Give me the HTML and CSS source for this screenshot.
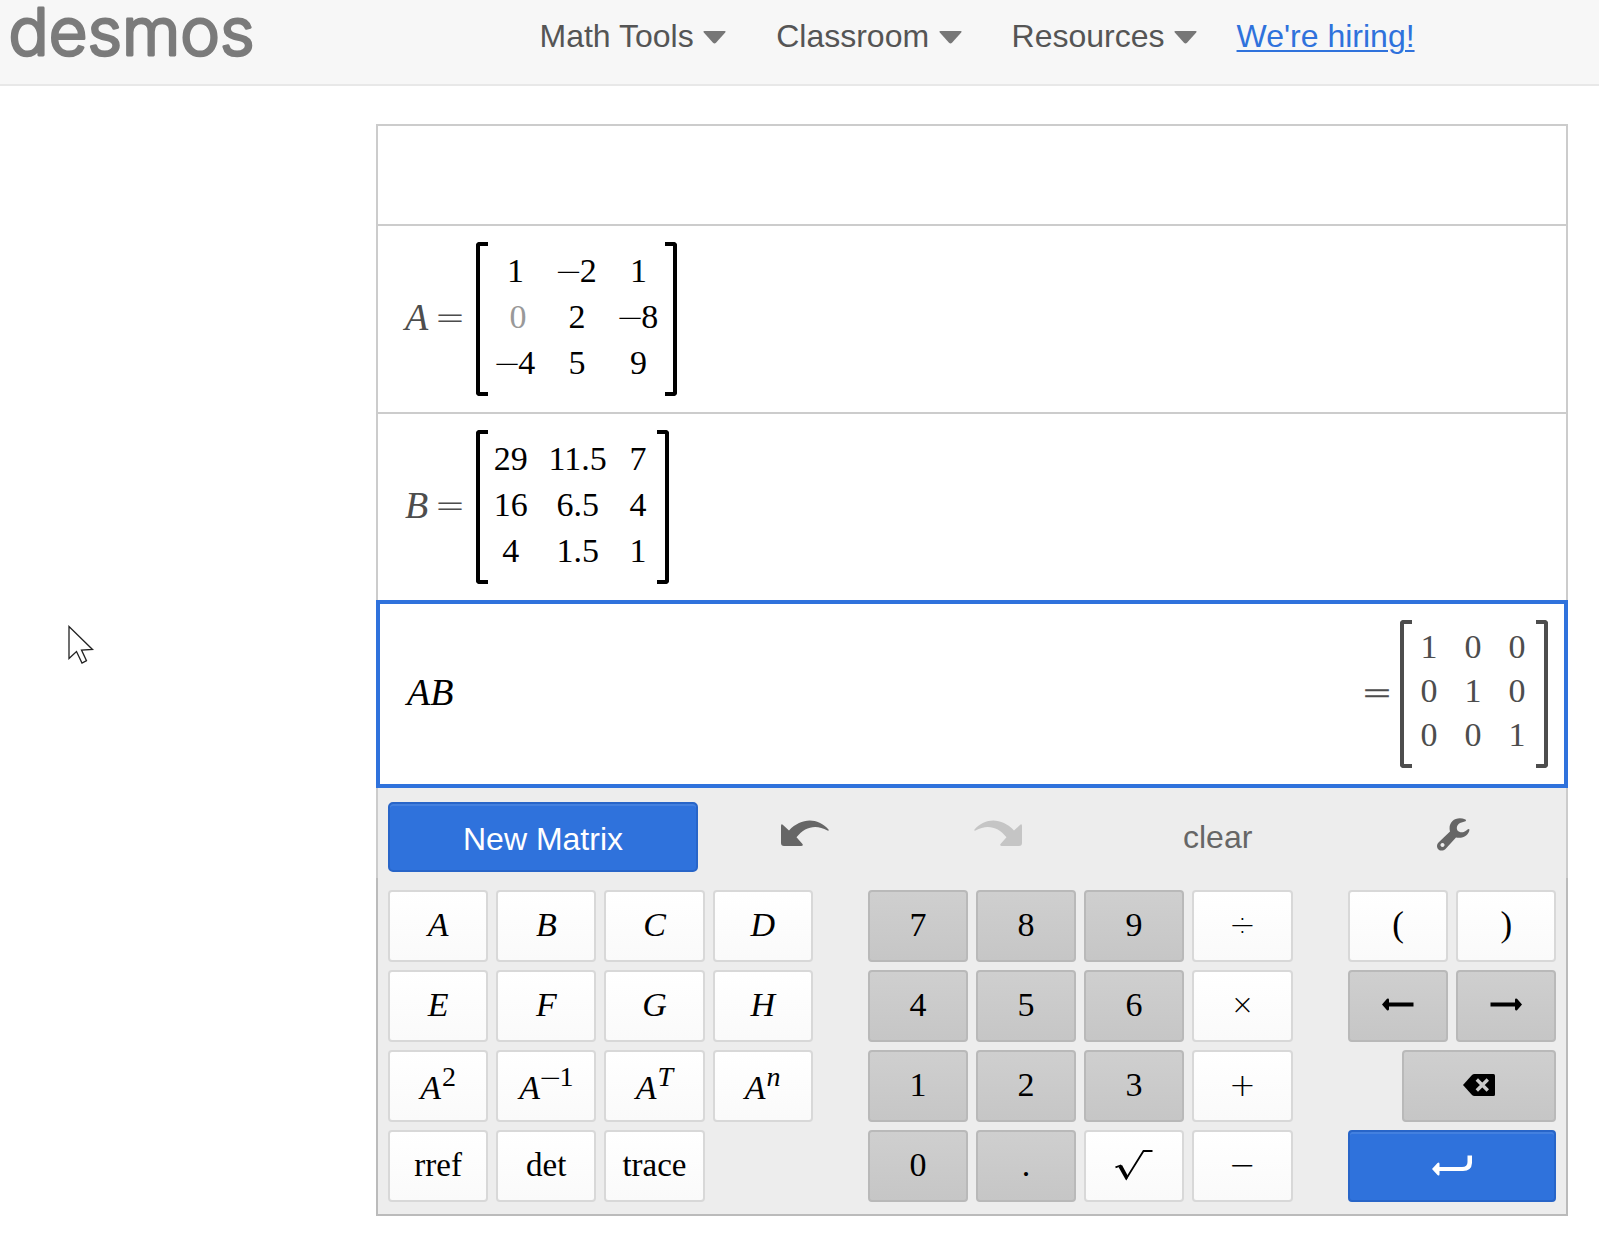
FILE: index.html
```
<!DOCTYPE html>
<html lang="en">
<head>
<meta charset="utf-8">
<title>Desmos | Matrix Calculator</title>
<link rel="stylesheet" href="styles.css">
</head>
<body>
<header class="header">
  <svg class="logo" width="260" height="70" viewBox="0 0 260 70"><text class="logo-text" x="8.5" y="55" textLength="246" lengthAdjust="spacingAndGlyphs">desmos</text></svg>
  <nav class="nav">
    <a class="nav-item">Math Tools<svg class="caret" width="23" height="13" viewBox="0 0 23 13"><path d="M1.500 0h20q1.800 0 .7 1.500L13 11.800q-1.500 1.400-3 0L.8 1.500Q-.3 0 1.500 0z"/></svg></a>
    <a class="nav-item">Classroom<svg class="caret" width="23" height="13" viewBox="0 0 23 13"><path d="M1.500 0h20q1.800 0 .7 1.500L13 11.800q-1.500 1.400-3 0L.8 1.500Q-.3 0 1.500 0z"/></svg></a>
    <a class="nav-item">Resources<svg class="caret" width="23" height="13" viewBox="0 0 23 13"><path d="M1.500 0h20q1.800 0 .7 1.500L13 11.800q-1.500 1.400-3 0L.8 1.500Q-.3 0 1.500 0z"/></svg></a>
    <a class="hiring" href="#">We're hiring!</a>
  </nav>
</header>
<main class="calculator">
  <section class="row row-empty"></section>
  <section class="row">
    <span class="label"><i>A</i></span><span class="equals">=</span>
    <div class="matrix matrix-a">
      <span>1</span><span><span class="minus">−</span>2</span><span>1</span>
      <span class="faded">0</span><span>2</span><span><span class="minus">−</span>8</span>
      <span><span class="minus">−</span>4</span><span>5</span><span>9</span>
    </div>
  </section>
  <section class="row">
    <span class="label"><i>B</i></span><span class="equals">=</span>
    <div class="matrix matrix-b">
      <span>29</span><span>11.5</span><span>7</span>
      <span>16</span><span>6.5</span><span>4</span>
      <span>4</span><span>1.5</span><span>1</span>
    </div>
  </section>
  <section class="row row-active">
    <span class="expression"><i>AB</i></span>
    <span class="equals">=</span>
    <div class="matrix matrix-result">
      <span>1</span><span>0</span><span>0</span>
      <span>0</span><span>1</span><span>0</span>
      <span>0</span><span>0</span><span>1</span>
    </div>
  </section>
  <section class="toolbar">
    <button class="new-matrix">New Matrix</button>
    <svg class="undo" width="48" height="27" viewBox="0 0 48 27"><path d="M0 6Q0 3 2.300 5.200L8 10.500C20-2 36-3 47.500 9.500Q48 11 46.500 10.500C35 4 24 6.500 15.500 17.300L21.500 24Q22.500 26 20 26H3Q0 26 0 23z"/></svg>
    <svg class="redo" width="48" height="27" viewBox="0 0 48 27"><path d="M48 6Q48 3 45.700 5.200L40 10.500C28-2 12-3 .5 9.500Q0 11 1.500 10.500C13 4 24 6.500 32.500 17.300L26.500 24Q25.500 26 28 26H45Q48 26 48 23z"/></svg>
    <span class="clear">clear</span>
    <svg class="wrench" width="33" height="33" viewBox="0 0 33 33"><path fill-rule="evenodd" d="M28.500 1.500C19 -2.500 10.500 4 13 13.500L1.500 24.500C-3 29.500 3.500 35.500 8.500 31L19 19.500C26 21 32 17 32.500 11.500Q31.500 10.500 30 12C26 15.500 22.500 14.500 20.500 12.500C19 10 20 6.500 23 5L28.500 3.200Q29.500 2.300 28.500 1.500zM5.500 25a2 2 0 1 0 .01 0z"/></svg>
  </section>
  <section class="keypad">
    <div class="keys keys-letters">
      <button class="key"><i>A</i></button><button class="key"><i>B</i></button><button class="key"><i>C</i></button><button class="key"><i>D</i></button>
      <button class="key"><i>E</i></button><button class="key"><i>F</i></button><button class="key"><i>G</i></button><button class="key"><i>H</i></button>
      <button class="key power"><i>A</i><sup>2</sup></button><button class="key power"><i>A</i><sup><span class="minus">−</span>1</sup></button><button class="key power"><i>A</i><sup><i>T</i></sup></button><button class="key power"><i>A</i><sup><i>n</i></sup></button>
      <button class="key word">rref</button><button class="key word">det</button><button class="key word">trace</button>
    </div>
    <div class="keys keys-numbers">
      <button class="key dark">7</button><button class="key dark">8</button><button class="key dark">9</button><button class="key op">÷</button>
      <button class="key dark">4</button><button class="key dark">5</button><button class="key dark">6</button><button class="key op times">×</button>
      <button class="key dark">1</button><button class="key dark">2</button><button class="key dark">3</button><button class="key op">+</button>
      <button class="key dark">0</button><button class="key dark">.</button>
      <button class="key"><svg class="root" width="38" height="31" viewBox="0 0 38 31"><path d="M.5 17.300L5.500 15.500L12 27.500L28.500 1H37.500" fill="none" stroke="#000" stroke-width="1.800"/><path d="M3.500 17L7 15L13.200 26.500L11.500 30.500L10.500 29.500z"/></svg></button>
      <button class="key op">−</button>
    </div>
    <div class="keys keys-actions">
      <button class="key paren">(</button><button class="key paren">)</button>
      <button class="key dark"><svg width="32" height="13" viewBox="0 0 32 13"><path d="M0 6.500L5 .8Q7 0 7 2V4.500H31.500V8.500H7V11Q7 13 5 12.200z"/></svg></button>
      <button class="key dark"><svg width="32" height="13" viewBox="0 0 32 13"><path d="M32 6.500L27 .8Q25 0 25 2V4.500H.5V8.500H25V11Q25 13 27 12.200z"/></svg></button>
      <button class="key dark backspace"><svg width="32" height="22" viewBox="0 0 32 22"><path d="M0 11L9 1Q10 0 11.500 0H30.500Q32 0 32 1.500V20.500Q32 22 30.500 22H11.500Q10 22 9 21z"/><path d="M13.800 5.500L24.800 16.500M24.800 5.500L13.800 16.500" stroke="#cacaca" stroke-width="3.400"/></svg></button>
      <button class="key blue enter"><svg width="40" height="21" viewBox="0 0 40 21"><path d="M0 14L5.500 8Q7.500 6.500 7.500 9V12H30Q35.500 12 35.500 7V0.500H40V8Q39.500 16 31 16H7.500V19Q7.500 21.500 5.500 20z" fill="#fff"/></svg></button>
    </div>
  </section>
</main>
<svg class="pointer" width="27" height="40" viewBox="0 0 27 40"><path d="M1 1.500V33.500L8.500 26.500L14 38L18.500 35.700L13.500 25L24.500 24.500z" fill="#fff" stroke="#222" stroke-width="1.300"/></svg>
</body>
</html>
```
FILE: styles.css
```
*, *::before, *::after { box-sizing: border-box; }

body {
  margin: 0;
  height: 1237px;
  overflow: hidden;
  background: #fff;
  color: #000;
  font-family: "Liberation Serif", serif;
}

button { border: 0; padding: 0; margin: 0; color: #000; }
svg { display: block; flex: none; }

.header {
  display: flex;
  height: 86px;
  background: #f7f7f7;
  border-bottom: 2px solid #e8e8e8;
  font: 32px/36px "Liberation Sans", sans-serif;
}
.logo { overflow: visible; }
.logo-text {
  font: 300 65px Inter, sans-serif;
  fill: #7b7b7b;
  stroke: #7b7b7b;
  stroke-width: 2.8px;
  stroke-linejoin: round;
}
.nav { display: flex; align-items: flex-start; padding: 18px 0 0 279.5px; }
.nav-item {
  display: flex;
  align-items: center;
  gap: 9.500px;
  margin-right: 50px;
  color: #555;
}
.nav-item:nth-child(3) { margin-right: 39.5px; }
.caret { margin-top: 3px; fill: #777; }
.hiring {
  color: #2f72dc;
  text-decoration-thickness: 2px;
  text-underline-offset: 3px;
}

.calculator { width: 1192px; margin: 38px 0 0 376px; }

.row {
  display: flex;
  align-items: center;
  height: 188px;
  border: 2px solid #ccc;
  border-bottom: 0;
  padding: 0 0 0 27px;
}
.row-empty { height: 100px; }
.row-active {
  border: 4px solid #2f72dc;
  padding: 0 16px 0 27px;
}

.label, .expression { font-size: 38px; line-height: 44px; }
.label { width: 31px; padding-bottom: 4px; color: #4d4d4d; }
.equals {
  display: flex;
  justify-content: center;
  width: 28px;
  margin-right: 12px;
  padding-bottom: 2px;
  color: #4d4d4d;
  font: 200 37px/44px "DejaVu Sans", sans-serif;
}
.expression { margin-right: auto; padding-bottom: 4px; }
.row-active .equals { margin-right: 9px; -webkit-text-stroke: 0.5px currentColor; }

.matrix {
  position: relative;
  display: grid;
  text-align: center;
  font-size: 34px;
}
.matrix::before, .matrix::after {
  content: "";
  position: absolute;
  top: 0;
  bottom: 0;
  width: 12px;
  border: 4px solid currentColor;
}
.matrix::before { left: 0; border-right: 0; border-radius: 4px 0 0 4px; }
.matrix::after { right: 0; border-left: 0; border-radius: 0 4px 4px 0; }
.matrix-a, .matrix-b { height: 154px; padding: 6px 0 0 9px; grid-auto-rows: 46px; line-height: 46px; }
.matrix-a { width: 201px; grid-template-columns: 61px 62px 61px; }
.matrix-b { width: 193px; grid-template-columns: 51.4px 82.6px 38px; }
.matrix-result {
  width: 148px;
  height: 148px;
  padding: 5px 0 0 7px;
  grid-template-columns: repeat(3, 44px);
  grid-auto-rows: 44px;
  line-height: 44px;
  color: #4d4d4d;
}
.faded { padding-left: 5px; color: #999; }
.minus {
  position: relative;
  top: 1px;
  margin: 0 -0.09em;
  font: 200 1em/1 "DejaVu Sans", sans-serif;
}

.toolbar {
  display: flex;
  align-items: flex-start;
  height: 90px;
  padding: 14px 0 0 10px;
  background: #ededed;
  border: solid #ccc;
  border-width: 0 2px;
  color: #666;
  fill: #666;
  font: 32px/38px "Liberation Sans", sans-serif;
}
.new-matrix {
  width: 310px;
  height: 70px;
  padding-top: 4px;
  border: 2px solid #2865c8;
  border-radius: 5px;
  background: #2f72dc;
  box-shadow: inset 0 2px #4380df;
  color: #fff;
  font: inherit;
}
.undo { margin: 18px 0 0 83px; }
.redo { margin: 18px 0 0 145px; fill: #c5c5c5; }
.clear { margin: 16px 0 0 161px; }
.wrench { margin: 16px 0 0 185px; }

.keypad {
  display: flex;
  justify-content: space-between;
  height: 338px;
  padding: 12px 9.600px 0 10px;
  background: #ededed;
  border: 2px solid #bbb;
  border-top: 0;
}
.keys {
  display: grid;
  grid-template-columns: repeat(4, 100.2px);
  grid-auto-rows: 72px;
  gap: 8px;
}
.keys-numbers { grid-template-columns: repeat(3, 100px) 100.600px; }
.keys-actions { grid-template-columns: repeat(2, 100.2px); }
.key {
  display: flex;
  align-items: center;
  justify-content: center;
  padding-bottom: 3px;
  border: 2px solid #d8d8d8;
  border-radius: 4px;
  background: linear-gradient(#fff, #fafafa);
  font: 34px/38px "Liberation Serif", serif;
}
.dark {
  border-color: #b9b9b9;
  background: linear-gradient(#cfcfcf, #c6c6c6);
}
.power { padding: 4px 0 0; }
.power sup {
  position: relative;
  top: -11px;
  margin-left: 1px;
  font-size: 28px;
}
.word { font-size: 33px; }
.op { padding-bottom: 2px; font: 200 32px/38px "DejaVu Sans", sans-serif; }
.times { font-size: 28px; }
.paren { font-size: 35px; }
.root { margin-top: 1px; }
.keys-actions svg { margin-top: 0; }
.keys-actions .backspace svg, .keys-actions .enter svg { margin-top: 1px; }
.backspace, .enter { grid-column: 1 / 3; }
.backspace { margin-left: 54px; }
.blue {
  border-color: #2865c8;
  background: #2f72dc;
  box-shadow: inset 0 2px #4380df;
}

.pointer { position: absolute; left: 68px; top: 625px; }
```
